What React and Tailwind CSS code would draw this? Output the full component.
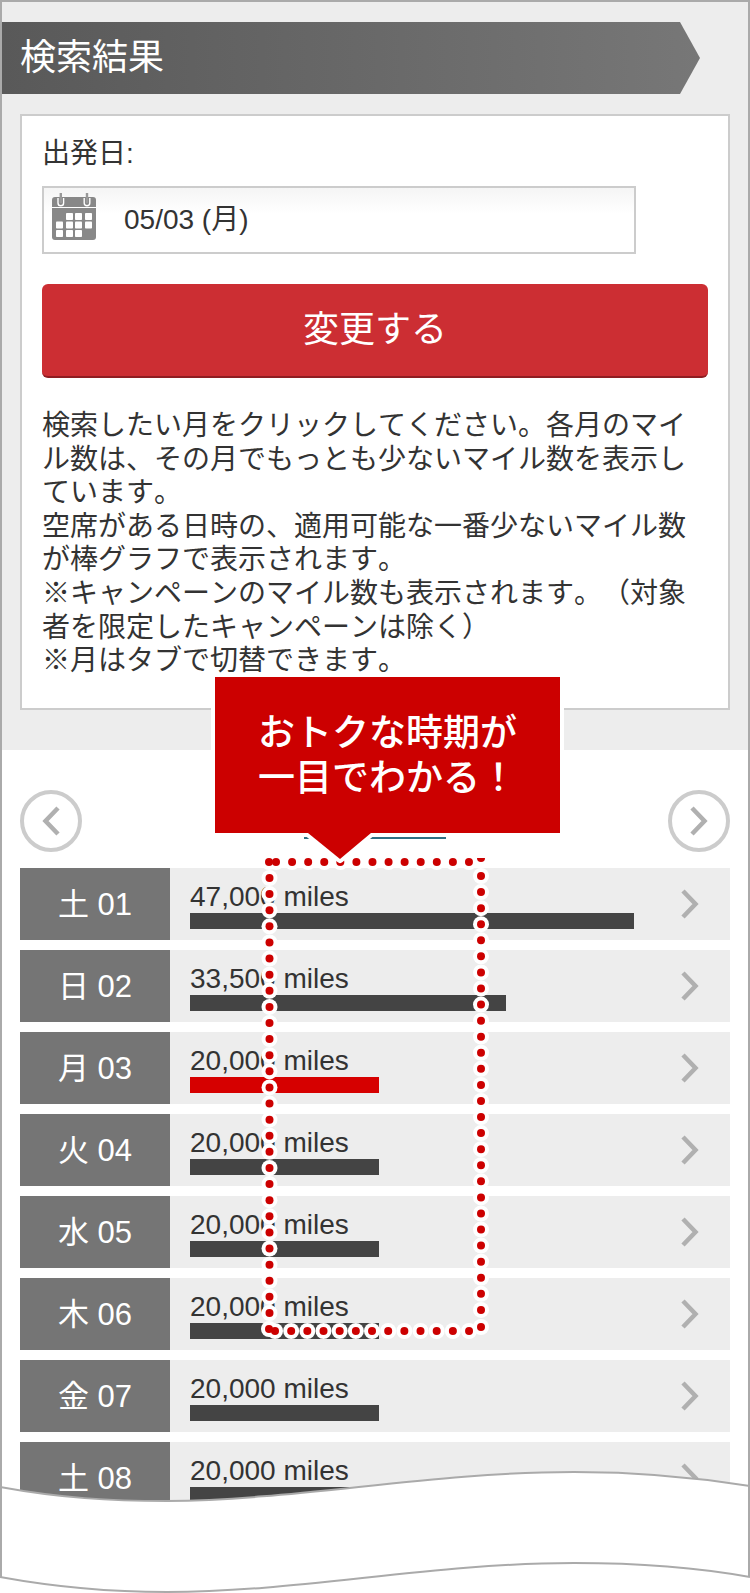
const CJK = "font-['Liberation_Sans','Noto_Sans_CJK_JP',sans-serif] [text-spacing-trim:space-all]";

const rows = [
  { d: "土 01", m: "47,000", w: 444 },
  { d: "日 02", m: "33,500", w: 316 },
  { d: "月 03", m: "20,000", w: 189, red: true },
  { d: "火 04", m: "20,000", w: 189 },
  { d: "水 05", m: "20,000", w: 189 },
  { d: "木 06", m: "20,000", w: 189 },
  { d: "金 07", m: "20,000", w: 189 },
  { d: "土 08", m: "20,000", w: 189 },
];

function CalendarIcon() {
  const squares = [
    [14, 20], [23, 20], [33, 20],
    [4, 28.5], [14, 28.5], [23, 28.5], [33, 28.5],
    [4, 37], [14, 37], [23, 37],
  ];
  return (
    <svg width="44" height="47" viewBox="0 0 44 47" className="shrink-0 self-start mt-[5px]">
      <path d="M3 4h38a3 3 0 0 1 3 3v37a3 3 0 0 1-3 3H3a3 3 0 0 1-3-3V7a3 3 0 0 1 3-3z" fill="#888888" />
      <rect x="0" y="14" width="44" height="1" fill="#ffffff" />
      <path d="M6 5v5a2.800 2.800 0 0 0 5.600 0V5M32.200 5v5a2.800 2.800 0 0 0 5.600 0V5" fill="none" stroke="#ffffff" strokeWidth="1.4" />
      <path d="M8.800 0v10M35 0v10" stroke="#999999" strokeWidth="2.4" />
      {squares.map(([x, y], i) => (
        <rect key={i} x={x} y={y} width="7" height="7" rx="0.8" fill="#ffffff" />
      ))}
    </svg>
  );
}

function Chevron({ left }) {
  return (
    <svg width="18" height="30" viewBox="0 0 18 30" className="shrink-0">
      <path d={left ? "M16 2 3.500 15 16 28" : "M2 2l12.500 13L2 28"} fill="none" stroke="#b0b0b0" strokeWidth="4.5" />
    </svg>
  );
}

function Circle({ left }) {
  return (
    <div className="w-[62px] h-[62px] rounded-full border-4 border-[#cccccc] bg-white flex items-center justify-center">
      <Chevron left={left} />
    </div>
  );
}

function Row({ d, m, w, red }) {
  return (
    <div className="flex h-[72px] bg-[#ededed]">
      <div className="w-[150px] shrink-0 flex items-center justify-center bg-[#757575] text-white text-[31px] leading-none">
        {d}
      </div>
      <div className="flex-1 pl-[20px] pr-[31px] flex items-center justify-between">
        <div className="flex flex-col self-start pt-[13px]">
          <div className="text-[28px] leading-[32px] text-[#333333]">{m} miles</div>
          <div className={`h-[16px] ${red ? "bg-[#d60000]" : "bg-[#444444]"}`} style={{ width: w }} />
        </div>
        <Chevron />
      </div>
    </div>
  );
}

function DottedBox() {
  const left = 269.5, right = 481, top = 862, bottom = 1331;
  const dots = [];
  dots.push([269, top]);
  for (let i = 0; i < 13; i++) dots.push([276 + i * 16.08, top]);
  for (let i = 0; i < 28; i++) dots.push([left, 878 + i * 16.11]);
  dots.push([269, 1329]);
  for (let i = 0; i < 28; i++) dots.push([right, 876 + i * 16.07]);
  for (let i = 0; i < 13; i++) dots.push([275 + i * 16.17, bottom]);
  dots.push([481, 1327]);
  return (
    <svg width="750" height="1593" className="absolute left-0 top-0 pointer-events-none">
      {dots.map(([x, y], i) => (
        <circle key={`h${i}`} cx={x} cy={y} r="8" fill="#ffffff" />
      ))}
      {dots.map(([x, y], i) => (
        <circle key={`d${i}`} cx={x} cy={y} r="4" fill="#cc0000" />
      ))}
      <path d="M477 858h8a4 4 0 0 1-8 0z" fill="#cc0000" />
      <path
        d="M308 833h63l-31 26z"
        fill="#cc0000"
        stroke="#ffffff"
        strokeWidth="8"
        strokeLinejoin="round"
        paintOrder="stroke"
      />
    </svg>
  );
}

function WaveCut() {
  const top = "M0 1487C60 1498 110 1501 167 1501C300 1500 430 1472 574 1472C640 1472 700 1478 750 1486";
  const bottom = "M750 1577C700 1568 640 1563 574 1563C430 1563 300 1592 167 1592C110 1592 60 1588 0 1577";
  return (
    <svg width="750" height="1593" className="absolute left-0 top-0 pointer-events-none">
      <path d={`${top}L${bottom.slice(1)}Z`} fill="#ffffff" />
      <path d={top} fill="none" stroke="#aaaaaa" strokeWidth="2" />
      <path d={bottom} fill="none" stroke="#aaaaaa" strokeWidth="2" />
      <path d="M1 1487V1577M749 1486V1577" fill="none" stroke="#aaaaaa" strokeWidth="2" />
    </svg>
  );
}

export default function App() {
  return (
    <div className={`relative w-[750px] h-[1593px] overflow-hidden bg-white ${CJK}`}>
      <div className="h-[1577px] border-t-2 border-x-2 border-[#aaaaaa] overflow-hidden">
        <section className="h-[748px] bg-[#ededed] pt-[20px]">
          <div className="w-[698px] h-[72px] flex items-center pl-[18px] text-white text-[36px] [font-kerning:none] bg-gradient-to-r from-[#595959] to-[#777777] [clip-path:polygon(0_0,678px_0,698px_36px,678px_100%,0_100%)]">
            検索結果
          </div>
          <div className="mx-[18px] mt-[20px] h-[596px] bg-white border-2 border-[#cccccc] px-[20px] pt-[21px] text-[#333333]">
            <div className="text-[28px] leading-[34px]">出発日:</div>
            <div className="mt-[15px] w-[594px] h-[68px] border-2 border-[#cccccc] bg-gradient-to-b from-[#f5f5f5] to-white to-40% flex items-center pl-[8px] gap-[28px]">
              <CalendarIcon />
              <span className="text-[28px] leading-none">05/03 (月)</span>
            </div>
            <button className="mt-[30px] w-[666px] h-[94px] rounded-[6px] bg-[#cc2e33] border-b-2 border-[#8f1d22] text-white text-[36px] [font-kerning:none]">
              変更する
            </button>
            <p className="mt-[31px] text-[28px] leading-[33.6px] [font-kerning:none]">
              検索したい月をクリックしてください。各月のマイル数は、その月でもっとも少ないマイル数を表示しています。
              <br />
              空席がある日時の、適用可能な一番少ないマイル数が棒グラフで表示されます。
              <br />
              ※キャンペーンのマイル数も表示されます。（対象者を限定したキャンペーンは除く）
              <br />
              ※月はタブで切替できます。
            </p>
          </div>
        </section>
        <section className="px-[18px] pt-[40px]">
          <div className="flex items-start justify-between h-[78px]">
            <Circle left />
            <div className="w-[142px] h-[2px] mt-[47px] bg-[#2f6f82]" />
            <Circle />
          </div>
          <div className="flex flex-col gap-[10px]">
            {rows.map((r) => (
              <Row key={r.d} {...r} />
            ))}
          </div>
        </section>
      </div>

      <DottedBox />

      <div className="absolute left-[211px] top-[677px] w-[353px] h-[156px] border-x-4 border-white">
        <div className="h-full bg-[#cc0000] text-white text-[37px] leading-[45px] font-medium [font-kerning:none] flex items-center justify-center text-center pt-[2px]">
          おトクな時期が
          <br />
          一目でわかる！
        </div>
      </div>

      <WaveCut />
    </div>
  );
}
